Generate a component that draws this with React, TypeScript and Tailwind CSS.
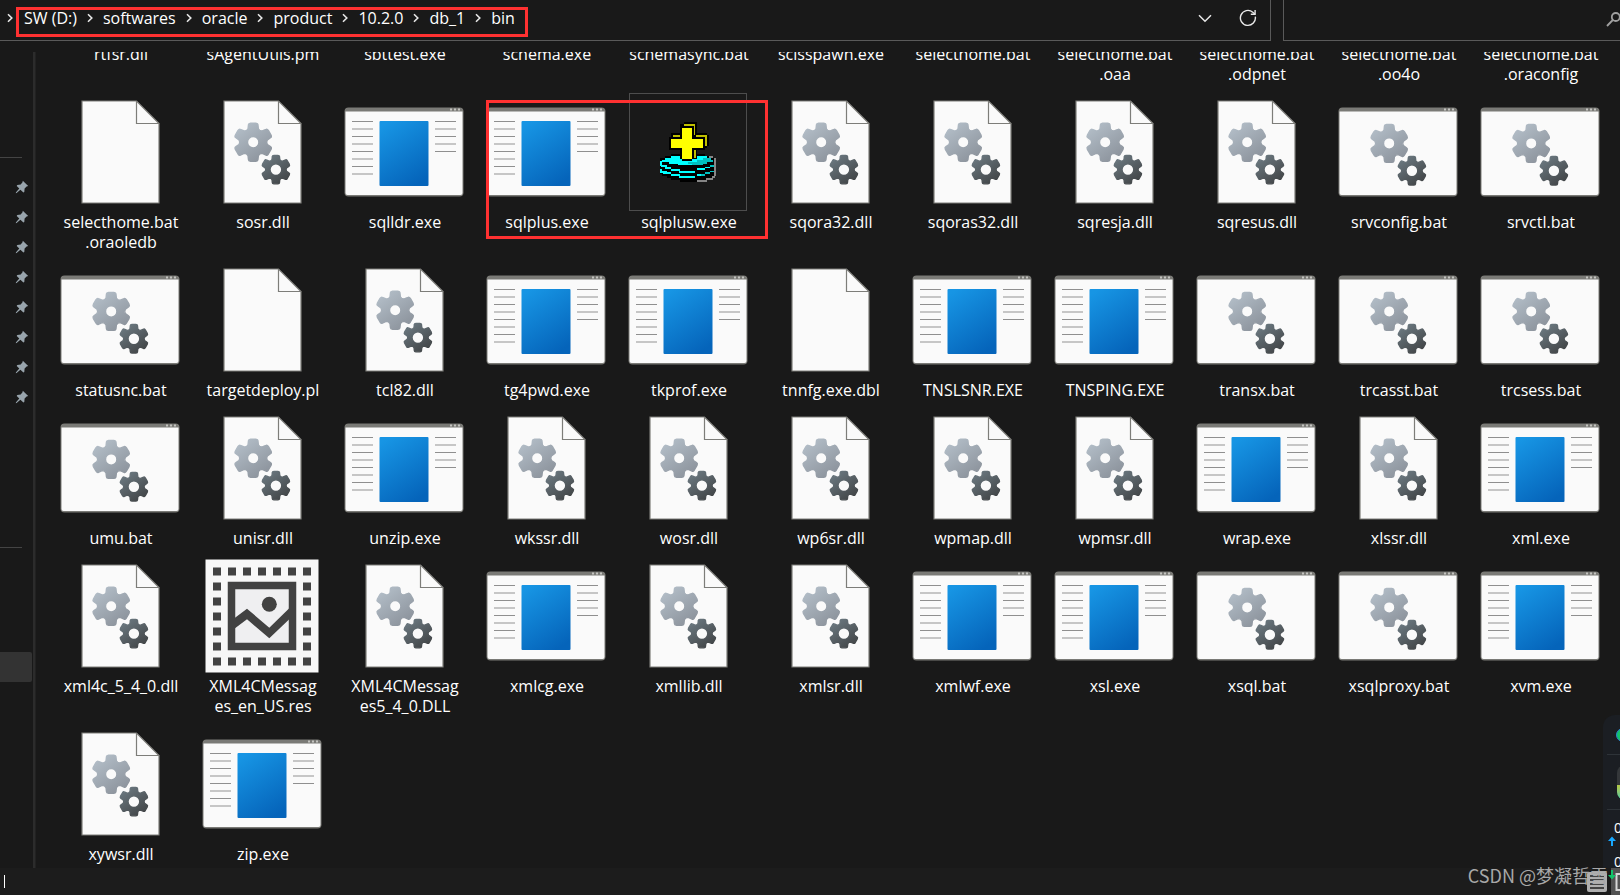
import React from "react";

type Kind = "doc" | "dll" | "exe" | "bat" | "res" | "sqlplusw";
type FileItem = { kind: Kind; lines: string[] };

const f = (kind: Kind, ...lines: string[]): FileItem => ({ kind, lines });

const files: FileItem[] = [
  f("dll", "rtfsr.dll"),
  f("doc", "sAgentUtils.pm"),
  f("exe", "sbttest.exe"),
  f("exe", "schema.exe"),
  f("bat", "schemasync.bat"),
  f("exe", "scisspawn.exe"),
  f("bat", "selecthome.bat"),
  f("doc", "selecthome.bat", ".oaa"),
  f("doc", "selecthome.bat", ".odpnet"),
  f("doc", "selecthome.bat", ".oo4o"),
  f("doc", "selecthome.bat", ".oraconfig"),
  f("doc", "selecthome.bat", ".oraoledb"),
  f("dll", "sosr.dll"),
  f("exe", "sqlldr.exe"),
  f("exe", "sqlplus.exe"),
  f("sqlplusw", "sqlplusw.exe"),
  f("dll", "sqora32.dll"),
  f("dll", "sqoras32.dll"),
  f("dll", "sqresja.dll"),
  f("dll", "sqresus.dll"),
  f("bat", "srvconfig.bat"),
  f("bat", "srvctl.bat"),
  f("bat", "statusnc.bat"),
  f("doc", "targetdeploy.pl"),
  f("dll", "tcl82.dll"),
  f("exe", "tg4pwd.exe"),
  f("exe", "tkprof.exe"),
  f("doc", "tnnfg.exe.dbl"),
  f("exe", "TNSLSNR.EXE"),
  f("exe", "TNSPING.EXE"),
  f("bat", "transx.bat"),
  f("bat", "trcasst.bat"),
  f("bat", "trcsess.bat"),
  f("bat", "umu.bat"),
  f("dll", "unisr.dll"),
  f("exe", "unzip.exe"),
  f("dll", "wkssr.dll"),
  f("dll", "wosr.dll"),
  f("dll", "wp6sr.dll"),
  f("dll", "wpmap.dll"),
  f("dll", "wpmsr.dll"),
  f("exe", "wrap.exe"),
  f("dll", "xlssr.dll"),
  f("exe", "xml.exe"),
  f("dll", "xml4c_5_4_0.dll"),
  f("res", "XML4CMessag", "es_en_US.res"),
  f("dll", "XML4CMessag", "es5_4_0.DLL"),
  f("exe", "xmlcg.exe"),
  f("dll", "xmllib.dll"),
  f("dll", "xmlsr.dll"),
  f("exe", "xmlwf.exe"),
  f("exe", "xsl.exe"),
  f("bat", "xsql.bat"),
  f("bat", "xsqlproxy.bat"),
  f("exe", "xvm.exe"),
  f("dll", "xywsr.dll"),
  f("exe", "zip.exe"),
];

const crumbs = ["SW (D:)", "softwares", "oracle", "product", "10.2.0", "db_1", "bin"];

function gearPath(cx: number, cy: number, r: number, hole: number): string {
  const pt = (deg: number, rad: number) => {
    const a = (deg * Math.PI) / 180;
    return `${(cx + rad * Math.sin(a)).toFixed(2)} ${(cy - rad * Math.cos(a)).toFixed(2)}`;
  };
  let d = "";
  for (let i = 0; i < 6; i++) {
    const a = i * 60;
    d += `${i ? "L" : "M"}${pt(a - 21, r * 0.72)}L${pt(a - 15, r * 0.91)}Q${pt(a - 14, r * 0.97)} ${pt(a - 8, r * 0.96)}`;
    d += `L${pt(a + 8, r * 0.96)}Q${pt(a + 14, r * 0.97)} ${pt(a + 15, r * 0.91)}L${pt(a + 21, r * 0.72)}`;
    d += `Q${pt(a + 30, r * 0.64)} ${pt(a + 39, r * 0.72)}`;
  }
  d += `ZM${cx - hole} ${cy}a${hole} ${hole} 0 1 0 ${2 * hole} 0a${hole} ${hole} 0 1 0 ${-2 * hole} 0Z`;
  return d;
}

function Gears({ dy = 0 }: { dy?: number }) {
  return (
    <g fillRule="evenodd" strokeLinejoin="round" strokeWidth="1.4">
      <path d={gearPath(51.2, 50.2 + dy, 20, 5.7)} fill="url(#gearLight)" stroke="url(#gearLight)" />
      <path d={gearPath(73.9, 77.6 + dy, 15, 5.9)} fill="url(#gearDark)" stroke="url(#gearDark)" />
    </g>
  );
}

function Page() {
  return (
    <g stroke="#7d7d79" strokeWidth="1.2">
      <path d="M22 9H76.500L99 31.500V111H22Z" fill="#fafafa" />
      <path d="M76.500 9V31.500H99" fill="none" />
    </g>
  );
}

function Frame() {
  return (
    <g>
      <rect x="0.5" y="15.500" width="119" height="89" rx="4" fill="#7a7a76" />
      <path d="M1.500 19.500H118.500V101a2 2 0 0 1-2 2H3.500a2 2 0 0 1-2-2Z" fill="#fafafa" />
      <g fill="#c4c4c0">
        <rect x="106" y="16.500" width="2" height="2" />
        <rect x="110" y="16.500" width="2" height="2" />
        <rect x="114" y="16.500" width="2" height="2" />
      </g>
    </g>
  );
}

function Stripes({ x, count }: { x: number; count: number }) {
  return (
    <g>
      {Array.from({ length: count }, (_, i) =>
        i % 2 === 0 ? (
          <rect key={i} x={x} y={29 + i * 7.5} width="21" height="1" fill="#8f8f8f" />
        ) : (
          <rect key={i} x={x} y={28.5 + i * 7.5} width="21" height="2" fill="#c6c6c6" />
        ),
      )}
    </g>
  );
}

function PlusDisc() {
  return (
    <svg viewBox="474 21 360 360" className="size-[120px]" shapeRendering="crispEdges" aria-hidden="true">
      <path
        d="M603 207H704V213H716V219H733V272H728V279H710V285H681V291H630V285H603V279H590V273H576V267H570V219H584V213H603Z"
        fill="#000"
      />
      <path d="M716 213H728V219H716ZM732 219H739V273H732ZM726 273H734V280H726ZM709 279H728V286H709ZM681 285H711V291H681Z" fill="#858585" />
      <path d="M603 213H710V219H722V224H728V230H710V236H677V241H625V236H597V230H576V224H584V219H603Z" fill="#0ff" />
      <path d="M682 224H699V219H722V224H728V230H710V236H699V241H666V236H655V230H682Z" fill="#00bfbf" />
      <g fill="#0ff">
        <path d="M570 228h6v12h14v6h14v6h26v5h46v6h-48v-5h-26v-6h-18v-6h-12z" />
        <path d="M682 250h23v5h-23zM705 245h15v5h-15z" />
        <path d="M570 251h6v6h14v5h14v6h26v5h46v6h-48v-5h-26v-6h-22v-5h-10z" />
        <path d="M682 268h12v5h-12z" />
      </g>
      <path d="M720 240h12v5h-12zM694 268h11v5h-11zM705 262h15v5h-15zM720 257h12v5h-12z" fill="#00bfbf" />
      <path d="M641 111H682V144H712V150H717V184H712V189H704V195H682V222H641V156H603V144H630V117H641Z" fill="#000" />
      <path
        d="M643 117H676V150H672V124H643ZM609 150H632V156H609ZM677 150H712V183H706V156H677ZM672 195H677V218H672Z"
        fill="#bfbf00"
      />
      <path d="M630 124H672V156H704V194H672V222H666V228H635V222H630V194H597V156H630Z" fill="#000" />
      <path d="M635 129H666V161H699V189H666V222H635V189H603V161H635Z" fill="#ff0" />
    </svg>
  );
}

function ResIcon() {
  const dots: React.ReactElement[] = [];
  for (let r = 0; r < 7; r++)
    for (let c = 0; c < 7; c++)
      if (r === 0 || r === 6 || c === 0 || c === 6)
        dots.push(<rect key={`${r}-${c}`} x={11 + c * 15} y={11.5 + r * 15} width="8" height="8" />);
  return (
    <>
      <rect x="3.500" y="3.500" width="113" height="113" fill="#f7f7f7" />
      <g fill="#424242">{dots}</g>
      <rect x="29.500" y="29.500" width="61" height="61" fill="#efeff1" stroke="#424242" strokeWidth="7.500" />
      <circle cx="67.300" cy="48.300" r="7.500" fill="#424242" />
      <path
        d="M33 61.800L45 52.700L67.300 71.700L87 52.400V63.400L67.300 82.300L45 63.300L33 72.300Z"
        fill="#424242"
      />
    </>
  );
}

function FileIcon({ kind }: { kind: Kind }) {
  if (kind === "sqlplusw") return <PlusDisc />;
  return (
    <svg viewBox="0 0 120 120" className="size-[120px]" aria-hidden="true">
      {(kind === "doc" || kind === "dll") && <Page />}
      {(kind === "exe" || kind === "bat") && <Frame />}
      {kind === "dll" && <Gears />}
      {kind === "bat" && <Gears dy={1.2} />}
      {kind === "exe" && (
        <>
          <Stripes x={8} count={8} />
          <Stripes x={91} count={5} />
          <rect x="35.500" y="29" width="49" height="65" rx="1" fill="url(#exeBlue)" />
        </>
      )}
      {kind === "res" && <ResIcon />}
    </svg>
  );
}

function Gradients() {
  return (
    <svg className="absolute size-0" aria-hidden="true">
      <defs>
        <linearGradient id="gearLight" x1="0.1" y1="0" x2="0.8" y2="1">
          <stop offset="0" stopColor="#b5c0ca" />
          <stop offset="1" stopColor="#8b929b" />
        </linearGradient>
        <linearGradient id="gearDark" x1="0.1" y1="0" x2="0.8" y2="1">
          <stop offset="0" stopColor="#6d7b83" />
          <stop offset="1" stopColor="#414446" />
        </linearGradient>
        <linearGradient id="exeBlue" x1="0.2" y1="0" x2="0.7" y2="1">
          <stop offset="0" stopColor="#1795e4" />
          <stop offset="1" stopColor="#0564ba" />
        </linearGradient>
      </defs>
    </svg>
  );
}

function Pin() {
  return (
    <svg viewBox="0 0 14 14" className="size-3.5" fill="#98a4ac" aria-hidden="true">
      <path d="M7.800 0.800L13.200 6L11.600 6.400L9.600 8.600L9.300 12L8.400 12.500L5.400 9.700L1.600 13L0.800 13.200L1 12.300L4.300 8.600L1.700 5.900L2.300 5L5.700 4.500L7.500 2.300Z" />
    </svg>
  );
}

function TopBar() {
  return (
    <header className="flex h-[41px] shrink-0 gap-3 text-[16px] leading-5">
      <nav aria-label="Address" className="flex min-w-0 flex-1 border-r border-b border-[#5a5a5a]">
        <div className="relative flex min-w-0 flex-1 items-start pt-2">
          <ol className="flex">
            {crumbs.map((c, i) => (
              <li key={c} className="flex items-center">
                <span className={i === 0 ? "flex w-6 justify-center pr-1" : "flex w-[26px] justify-center"}>
                  <svg viewBox="0 0 8 10" className="h-2.5 w-2" fill="none" stroke="#e8e8e8" strokeWidth="1.6" aria-hidden="true">
                    <path d="M2 1.200L5.800 5L2 8.800" />
                  </svg>
                </span>
                <a href="#" className="whitespace-nowrap">
                  {c}
                </a>
              </li>
            ))}
          </ol>
          <div className="pointer-events-none absolute top-[7px] left-4 h-[30px] w-[512px] border-3 border-[#ff3131]" />
        </div>
        <button aria-label="Previous locations" className="flex h-9 w-[42px] items-center justify-center">
          <svg viewBox="0 0 14 14" className="size-3.5" fill="none" stroke="#e8e8e8" strokeWidth="1.5" aria-hidden="true">
            <path d="M1 4.200L7 10.200L13 4.200" />
          </svg>
        </button>
        <button aria-label="Refresh" className="flex h-9 w-11 items-center justify-center">
          <svg viewBox="0 0 18 18" className="size-[18px]" fill="none" stroke="#e8e8e8" strokeWidth="1.4" aria-hidden="true">
            <path d="M16.300 7.600A7.500 7.500 0 1 1 13.800 3.200L15.800 5" />
            <path d="M16.100 1V5.300H11.800" />
          </svg>
        </button>
      </nav>
      <div className="flex w-[337px] shrink-0 items-center border-b border-l border-[#5a5a5a]">
        <input aria-label="Search" type="search" className="min-w-0 flex-1 bg-transparent outline-none" />
        <svg viewBox="0 0 14 18" className="h-[18px] w-3.5" fill="none" stroke="#a0a0a0" strokeWidth="1.8" aria-hidden="true">
          <circle cx="9.800" cy="6" r="4" />
          <path d="M6.800 9L1 15" />
        </svg>
      </div>
    </header>
  );
}

function Sidebar() {
  return (
    <aside className="flex w-[33px] shrink-0 flex-col">
      <div className="mt-[105px] w-[22px] border-t border-[#444]" />
      <ul className="mt-[14px]">
        {Array.from({ length: 8 }, (_, i) => (
          <li key={i} className="flex h-[30px] items-center pl-[15px]">
            <Pin />
          </li>
        ))}
      </ul>
      <div className="mt-[135px] w-[22px] border-t border-[#444]" />
      <button aria-label="SW (D:)" className="mt-[104px] h-[30px] w-8 rounded-r-xs bg-[#333]" />
    </aside>
  );
}

function Monitor() {
  return (
    <div className="pointer-events-none absolute right-0 bottom-0 h-[180px] w-[17px] overflow-hidden">
      <div className="flex h-[153px] flex-col rounded-tl-xl bg-[#1b1e23] pl-1">
        <div className="flex h-10 shrink-0 items-center border-b border-[#2e3338] pl-[9px]">
          <span className="size-[14px] shrink-0 rounded-full border border-[#2f7fd0] bg-[#12c46a]" />
        </div>
        <div className="flex h-[55px] shrink-0 items-center border-b border-[#2e3338] pl-[10px]">
          <span className="flex h-[35px] w-[30px] shrink-0 flex-col justify-end overflow-hidden rounded-lg bg-[#34373a]">
            <span className="h-[15px] bg-linear-to-b from-[#b5c840] to-[#3cc8a0]" />
          </span>
        </div>
        <div className="flex flex-col gap-2 pt-2.5 text-[14px] leading-4">
          {["#18a8ff", "#12c46a"].map((color, i) => (
            <div key={color}>
              <span className="block pl-[7px]">0</span>
              <svg viewBox="0 0 8 10" className="ml-px h-2.5 w-2" fill={color} aria-hidden="true">
                <path d={i === 0 ? "M4 0.500L8 5H5V10H3V5H0Z" : "M4 9.500L8 5H5V0H3V5H0Z"} />
              </svg>
            </div>
          ))}
        </div>
      </div>
    </div>
  );
}

function StatusBar() {
  return (
    <footer className="flex h-[27px] shrink-0 items-center justify-between bg-[#1c1c1c] pl-1">
      <span className="h-[13px] w-px bg-white" />
    </footer>
  );
}

function ViewSwitch() {
  return (
    <div className="absolute right-0 bottom-0 flex items-center gap-1">
      <button aria-label="Details view" className="opacity-85">
        <svg viewBox="0 0 20 20" className="size-5" aria-hidden="true">
          <rect width="20" height="20" rx="2" fill="#c9c9c9" />
          <path d="M3 4H17M3 8H17M3 12H17M3 16H17" stroke="#222" strokeWidth="1.300" />
        </svg>
      </button>
      <button aria-label="Icon view" className="flex h-[27px] w-[9px] items-center justify-end bg-[#6a6a6a]/70">
        <svg viewBox="0 0 5 20" className="h-5 w-[5px]" fill="none" stroke="#d8d8d8" strokeWidth="2" aria-hidden="true">
          <path d="M6 2H1.500V18H6" />
        </svg>
      </button>
    </div>
  );
}

export default function App() {
  return (
    <div className="relative flex h-screen flex-col overflow-hidden bg-[#191919] font-['Open_Sans','Noto_Sans_CJK_SC',sans-serif] text-white">
      <Gradients />
      <TopBar />
      <div className="flex min-h-0 flex-1 pt-[11px]">
        <Sidebar />
        <div className="w-[3px] shrink-0 border-r border-[#222] bg-[#2c2c2c]" />
        <main className="relative min-w-0 flex-1 overflow-hidden pl-[13px]">
          <ul className="-mt-32 grid grid-cols-[repeat(auto-fill,142px)] gap-y-2">
            {files.map((file) => (
              <li key={file.lines.join("")} className="flex items-start justify-center">
                <button className="flex w-[142px] flex-col items-center text-[16px] leading-5">
                  <span className="relative">
                    <FileIcon kind={file.kind} />
                    {file.kind === "sqlplusw" && <span className="absolute inset-px border border-[#4d4d4d]" />}
                  </span>
                  {file.lines.map((line) => (
                    <span key={line} className="pl-0.5 whitespace-nowrap">
                      {line}
                    </span>
                  ))}
                </button>
              </li>
            ))}
          </ul>
          <div className="pointer-events-none absolute top-12 left-[450px] h-[139px] w-[282px] border-3 border-[#ff3131]" />
        </main>
      </div>
      <StatusBar />
      <ViewSwitch />
      <Monitor />
      <p className="absolute right-3 bottom-2 font-['Noto_Sans_CJK_SC',sans-serif] text-[18px] leading-6 text-[#a8a8a8]">
        CSDN @梦凝哲雪
      </p>
    </div>
  );
}
